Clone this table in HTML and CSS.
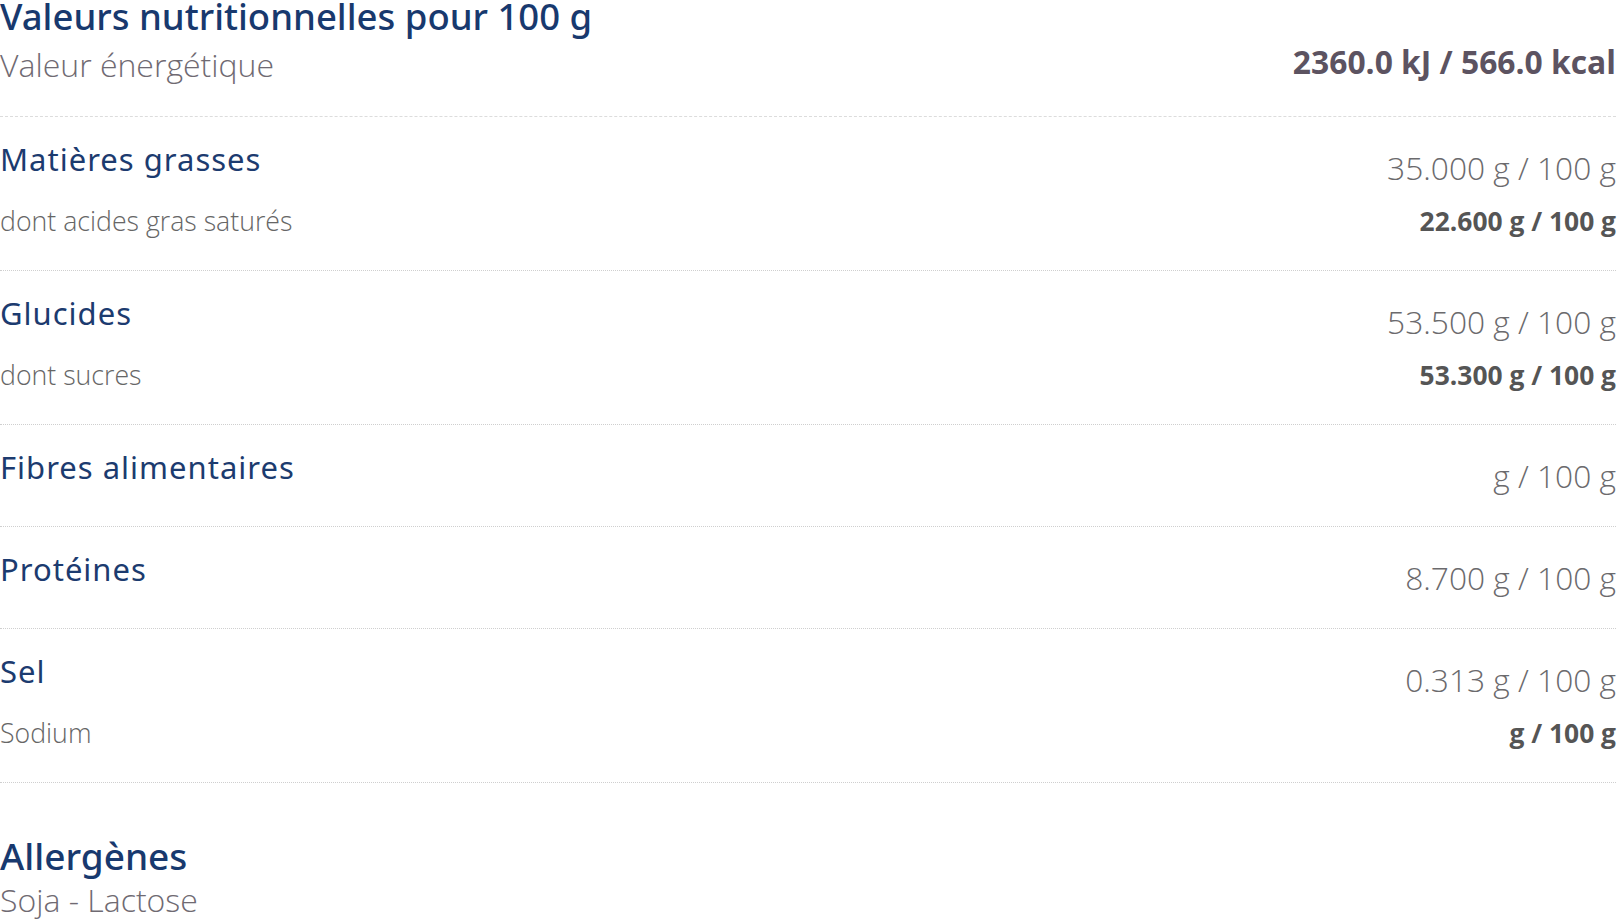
FILE: index.html
```html
<!DOCTYPE html>
<html lang="fr">
<head>
<meta charset="utf-8">
<title>Valeurs nutritionnelles</title>
<link rel="stylesheet" href="styles.css">
</head>
<body>
<section class="nutri">
  <h2 class="title">Valeurs nutritionnelles pour 100 g</h2>
  <div class="energy">
    <span class="energy-label">Valeur énergétique</span>
    <span class="energy-value">2360.0 kJ / 566.0 kcal</span>
  </div>

  <div class="item">
    <div class="row main"><span class="name">Matières grasses</span><span class="val">35.000 g / 100 g</span></div>
    <div class="row sub"><span class="sub-name">dont acides gras saturés</span><span class="sub-val">22.600 g / 100 g</span></div>
  </div>
  <div class="item">
    <div class="row main"><span class="name">Glucides</span><span class="val">53.500 g / 100 g</span></div>
    <div class="row sub"><span class="sub-name">dont sucres</span><span class="sub-val">53.300 g / 100 g</span></div>
  </div>
  <div class="item">
    <div class="row main"><span class="name">Fibres alimentaires</span><span class="val">g / 100 g</span></div>
  </div>
  <div class="item">
    <div class="row main"><span class="name">Protéines</span><span class="val">8.700 g / 100 g</span></div>
  </div>
  <div class="item">
    <div class="row main"><span class="name">Sel</span><span class="val">0.313 g / 100 g</span></div>
    <div class="row sub"><span class="sub-name">Sodium</span><span class="sub-val">g / 100 g</span></div>
  </div>

  <h2 class="allergen-title">Allergènes</h2>
  <p class="allergen-text">Soja - Lactose</p>
</section>
</body>
</html>
```

FILE: styles.css
```css
html, body {
  margin: 0;
  padding: 0;
  background: #ffffff;
}

.nutri {
  width: 1616px;
  font-family: "Open Sans", "Noto Sans", sans-serif;
}

.title {
  margin: 0;
  padding-top: 2px;
  font-family: "Noto Sans", sans-serif;
  font-weight: 500;
  font-size: 36.5px;
  line-height: 28px;
  color: #18396e;
}

.energy {
  display: flex;
  justify-content: space-between;
  align-items: flex-start;
  height: 86px;
  border-bottom: 1px dashed #dcdcdc;
}

.energy-label {
  margin-top: 15px;
  font-family: "Open Sans", sans-serif;
  font-weight: 300;
  font-size: 32px;
  line-height: 40px;
  color: #6f6a72;
}

.energy-value {
  margin-top: 12px;
  font-weight: 700;
  font-size: 31.8px;
  line-height: 40px;
  color: #5c5361;
}

.item {
  padding: 22px 0 29px;
  border-bottom: 1px dotted #cfcfcf;
}

.row {
  display: flex;
  justify-content: space-between;
  align-items: flex-start;
}

.name {
  font-family: "Noto Sans", sans-serif;
  font-weight: 400;
  font-size: 31px;
  line-height: 40px;
  letter-spacing: 1px;
  color: #1c3b6f;
}

.val {
  margin-top: 8px;
  font-weight: 300;
  font-size: 31.7px;
  line-height: 42px;
  color: #6b6a6d;
}

.sub {
  margin-top: 12px;
  align-items: baseline;
}

.sub-name {
  font-weight: 300;
  font-size: 26.7px;
  line-height: 40px;
  color: #666666;
}

.sub-val {
  font-weight: 700;
  font-size: 26.4px;
  line-height: 40px;
  color: #555555;
}

.allergen-title {
  margin: 51px 0 0;
  font-family: "Noto Sans", sans-serif;
  font-weight: 500;
  font-size: 37px;
  line-height: 44px;
  color: #18396e;
}

.allergen-text {
  margin: 2px 0 0;
  font-weight: 300;
  font-size: 32px;
  line-height: 40px;
  color: #6f6a72;
}
```
